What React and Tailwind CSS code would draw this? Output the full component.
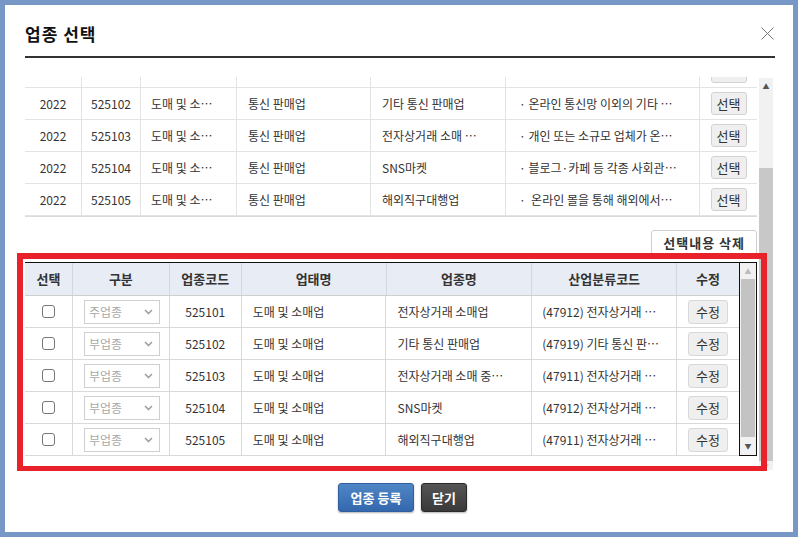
const topRows = [
  ["2022", "525102", "도매 및 소…", "통신 판매업", "기타 통신 판매업", "· 온라인 통신망 이외의 기타 …"],
  ["2022", "525103", "도매 및 소…", "통신 판매업", "전자상거래 소매 …", "· 개인 또는 소규모 업체가 온…"],
  ["2022", "525104", "도매 및 소…", "통신 판매업", "SNS마켓", "· 블로그·카페 등 각종 사회관…"],
  ["2022", "525105", "도매 및 소…", "통신 판매업", "해외직구대행업", "·  온라인 몰을 통해 해외에서…"],
];

const bizRows = [
  ["주업종", "525101", "도매 및 소매업", "전자상거래 소매업", "(47912) 전자상거래 …"],
  ["부업종", "525102", "도매 및 소매업", "기타 통신 판매업", "(47919) 기타 통신 판…"],
  ["부업종", "525103", "도매 및 소매업", "전자상거래 소매 중…", "(47911) 전자상거래 …"],
  ["부업종", "525104", "도매 및 소매업", "SNS마켓", "(47912) 전자상거래 …"],
  ["부업종", "525105", "도매 및 소매업", "해외직구대행업", "(47911) 전자상거래 …"],
];

function PickButton({ label }) {
  return (
    <div className="w-[36px] h-[23px] flex items-center justify-center rounded-[3px] border border-[#d2d2d2] bg-[#efefef] text-[13px] text-[#333]">
      {label}
    </div>
  );
}

function TopRow({ row }) {
  return (
    <div className="flex h-[32px] border-b border-[#e3e3e3] text-[12px] text-[#333]">
      <div className="w-[57px] flex items-center justify-center border-r border-[#e3e3e3]">{row[0]}</div>
      <div className="w-[59px] flex items-center justify-center border-r border-[#e3e3e3]">{row[1]}</div>
      <div className="w-[96px] flex items-center pl-[10px] border-r border-[#e3e3e3] whitespace-nowrap overflow-hidden">{row[2]}</div>
      <div className="w-[134px] flex items-center pl-[11px] border-r border-[#e3e3e3] whitespace-nowrap overflow-hidden">{row[3]}</div>
      <div className="w-[135px] flex items-center pl-[11px] border-r border-[#e3e3e3] whitespace-nowrap overflow-hidden">{row[4]}</div>
      <div className="w-[194px] flex items-center pl-[13px] border-r border-[#e3e3e3] whitespace-pre overflow-hidden">{row[5]}</div>
      <div className="w-[57px] flex items-center justify-center">
        <PickButton label="선택" />
      </div>
    </div>
  );
}

function Chevron() {
  return (
    <svg width="9" height="6" viewBox="0 0 9 6" fill="none">
      <path d="M1 1l3.5 3.5L8 1" stroke="#9a9a9a" strokeWidth="1.5" />
    </svg>
  );
}

function BizRow({ row }) {
  return (
    <div className="flex h-[32px] border-b border-[#d9d9d9] text-[12px] text-[#333]">
      <div className="w-[48px] flex items-center justify-center border-r border-[#d9d9d9]">
        <div className="w-[13px] h-[13px] rounded-[3px] border border-[#767676] bg-white" />
      </div>
      <div className="w-[97px] flex items-center pl-[11px] border-r border-[#d9d9d9]">
        <div className="w-[76px] h-[24px] flex items-center justify-between pl-[4px] pr-[6px] border border-[#cfcfcf] bg-white text-[#a8a8a8]">
          <span>{row[0]}</span>
          <Chevron />
        </div>
      </div>
      <div className="w-[72px] flex items-center justify-center border-r border-[#d9d9d9]">{row[1]}</div>
      <div className="w-[145px] flex items-center pl-[11px] border-r border-[#d9d9d9] whitespace-nowrap overflow-hidden">{row[2]}</div>
      <div className="w-[146px] flex items-center pl-[11px] border-r border-[#d9d9d9] whitespace-nowrap overflow-hidden">{row[3]}</div>
      <div className="w-[145px] flex items-center pl-[10px] border-r border-[#d9d9d9] whitespace-nowrap overflow-hidden">{row[4]}</div>
      <div className="w-[62px] flex items-center justify-center">
        <div className="w-[40px] h-[24px] flex items-center justify-center rounded-[3px] border border-[#d8d8d8] bg-[#efefef] text-[13px] text-[#333]">
          수정
        </div>
      </div>
    </div>
  );
}

export default function App() {
  const heads = [
    ["선택", "w-[48px]"],
    ["구분", "w-[97px]"],
    ["업종코드", "w-[72px]"],
    ["업태명", "w-[145px]"],
    ["업종명", "w-[146px]"],
    ["산업분류코드", "w-[145px]"],
    ["수정", "w-[62px]"],
  ];

  return (
    <div className="w-[798px] h-[537px] bg-[#7797c6] p-[5px] font-['Noto_Sans_CJK_KR','Noto_Sans',sans-serif]">
      <div className="relative h-[527px] bg-white">
        {/* title */}
        <div className="flex items-center justify-between h-[51px] pt-[6px] pl-[20px] pr-[19px]">
          <h1 className="text-[17px] font-bold text-[#111] tracking-[1px]">업종 선택</h1>
          <svg width="13" height="13" viewBox="0 0 13 13">
            <path d="M0.5 0.5l12 12M12.5 0.5l-12 12" stroke="#777" strokeWidth="1" />
          </svg>
        </div>
        <div className="ml-[20px] w-[750px] h-[2px] bg-[#333]" />

        {/* scroll body */}
        <div className="flex h-[412px]">
          <div className="ml-[20px] w-[732px]">
            <div className="h-[19px]" />
            <div className="h-[11px] overflow-hidden flex flex-col justify-end">
              <div className="flex h-[32px] shrink-0 border-b border-[#e3e3e3]">
                <div className="w-[57px] border-r border-[#e3e3e3]" />
                <div className="w-[59px] border-r border-[#e3e3e3]" />
                <div className="w-[96px] border-r border-[#e3e3e3]" />
                <div className="w-[134px] border-r border-[#e3e3e3]" />
                <div className="w-[135px] border-r border-[#e3e3e3]" />
                <div className="w-[194px] border-r border-[#e3e3e3]" />
                <div className="w-[57px] flex items-center justify-center">
                  <PickButton label="" />
                </div>
              </div>
            </div>
            {topRows.map((r) => (
              <TopRow key={r[1]} row={r} />
            ))}
            <div className="h-[1px] bg-[#dadada]" />

            <div className="flex justify-end mt-[13px]">
              <div className="h-[26px] px-[11px] flex items-center rounded-[3px] border border-[#cfcfcf] bg-white text-[13px] font-bold text-[#333] tracking-[1px]">
                선택내용 삭제
              </div>
            </div>

            {/* registered list */}
            <div className="flex mt-[6px] h-[194px]">
              <div className="w-[714px] border-t border-[#111]">
                <div className="flex h-[33px] bg-[#e8ecf4] border-b border-[#cfcfcf] text-[13px] font-bold text-[#333]">
                  {heads.map(([h, w], i) => (
                    <div key={h + i} className={`${w} flex items-center justify-center ${i < 6 ? "border-r border-[#d3d8e0]" : ""}`}>
                      {h}
                    </div>
                  ))}
                </div>
                {bizRows.map((r) => (
                  <BizRow key={r[1]} row={r} />
                ))}
              </div>
              <div className="w-[18px] border border-[#111] bg-[#f1f1f1] flex flex-col items-center">
                <div className="h-[16px] flex items-center justify-center text-[7px] text-[#bbb]">▲</div>
                <div className="w-[14px] h-[158px] bg-[#c3c3c3]" />
                <div className="flex-1 flex items-center justify-center text-[7px] text-[#555]">▼</div>
              </div>
            </div>
          </div>

          {/* outer scrollbar */}
          <div className="ml-[2px] mt-[20px] w-[14px] h-[392px] bg-[#f1f1f1] flex flex-col items-center">
            <div className="h-[16px] flex items-center justify-center text-[7px] text-[#555]">▲</div>
            <div className="mt-[74px] w-[14px] h-[294px] bg-[#c8c8c8]" />
            <div className="flex-1 flex items-center justify-center text-[6px] text-[#ccc]">▼</div>
          </div>
        </div>

        {/* footer buttons */}
        <div className="flex justify-center gap-[7px] mt-[13px] pl-[7px]">
          <div className="w-[76px] h-[29px] flex items-center justify-center rounded-[3px] bg-gradient-to-b from-[#4f86c6] to-[#3468ad] border border-[#2f5f9e] text-[13px] font-bold text-white shadow-[0_1px_2px_rgba(0,0,0,0.3)]">
            업종 등록
          </div>
          <div className="w-[46px] h-[29px] flex items-center justify-center rounded-[3px] bg-gradient-to-b from-[#555] to-[#3a3a3a] border border-[#2a2a2a] text-[13px] font-bold text-white shadow-[0_1px_2px_rgba(0,0,0,0.3)]">
            닫기
          </div>
        </div>

        {/* red highlight annotation */}
        <div className="absolute left-[12px] top-[248px] w-[750px] h-[218px] border-[6px] border-b-[5px] border-[#e8212b] pointer-events-none" />
      </div>
    </div>
  );
}
